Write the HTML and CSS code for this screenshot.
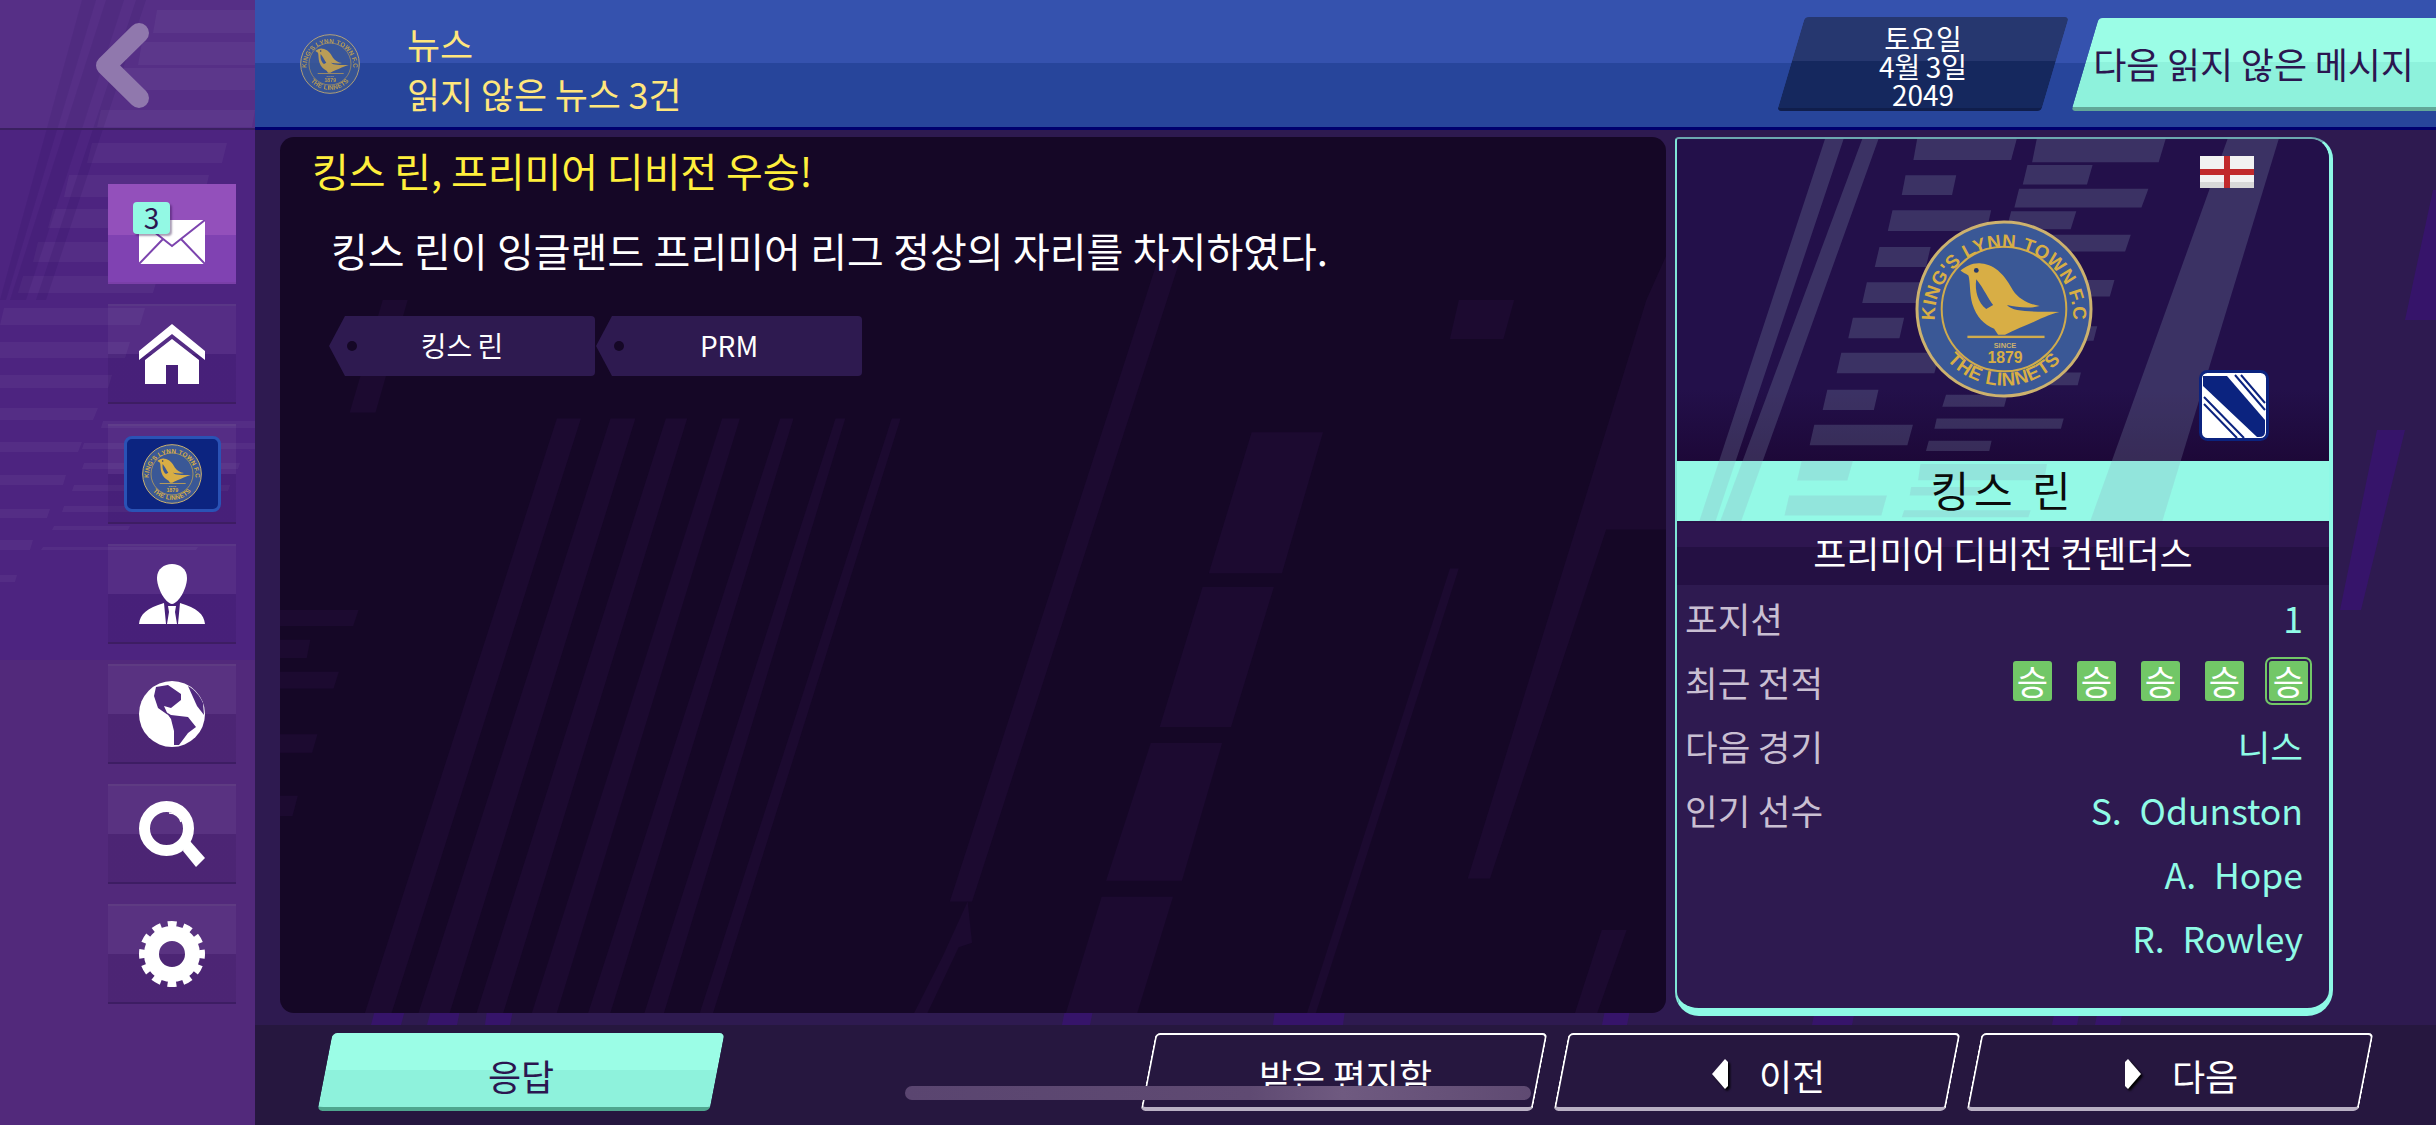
FILE: index.html
```html
<!DOCTYPE html>
<html lang="ko">
<head>
    <meta charset="UTF-8">
    <meta name="viewport" content="width=device-width, initial-scale=1.0">
    <title>뉴스</title>
    <link rel="stylesheet" href="styles.css">
</head>
<body>
    <svg class="defs" width="0" height="0">
        <defs>
            <symbol id="crest" viewBox="0 0 180 180">
                <circle cx="90" cy="90" r="88" fill="#3a5896" stroke="#cdb26e" stroke-width="3"/>
                <circle cx="90" cy="90" r="63" fill="none" stroke="#d0ab4d" stroke-width="2"/>
                <path id="arcTop" d="M20 98A70 70 0 1 1 160 98" fill="none"/>
                <path id="arcBot" d="M15 108A77 77 0 0 0 165 108" fill="none"/>
                <text class="crest-text"><textPath href="#arcTop" startOffset="50%" text-anchor="middle">KING'S LYNN TOWN F.C</textPath></text>
                <text class="crest-text"><textPath href="#arcBot" startOffset="50%" text-anchor="middle">THE LINNETS</textPath></text>
                <path fill="#d8ae45" d="M46 51C52 47 58 43 67 44C82 45 92 58 99 71C105 80 115 85 126 87C116 90 103 88 93 86C100 94 120 92 146 93C130 97 120 104 106 109C100 112 95 114 91 116L84 116L80 110C70 106 62 98 58 85C55 74 56 62 54 56C51 54 48 53 46 51Z"/>
                <path fill="#3a5896" d="M62 60C60 72 64 84 72 90L79 86C74 80 70 70 62 60Z"/>
                <circle cx="62" cy="51" r="2.4" fill="#24386e"/>
                <rect x="53" y="117" width="78" height="2.4" fill="#d0ab4d"/>
                <text class="crest-small" x="91" y="129" text-anchor="middle">SINCE</text>
                <text class="crest-year" x="91" y="145" text-anchor="middle">1879</text>
            </symbol>
        </defs>
    </svg>

    <div class="app">
        <aside class="sidebar">
            <svg class="sidebar-bars" viewBox="0 0 255 660" width="255" height="660">
                <g fill="#fff" fill-opacity=".045">
                    <polygon points="157,10 255,10 255,33 153,33"/>
                    <polygon points="142,42 255,42 255,65 138,65"/>
                    <polygon points="124,68 255,68 255,90 120,90"/>
                    <polygon points="101,110 255,110 252,127 97,127"/>
                    <polygon points="92,143 227,143 222,163 87,163"/>
                    <polygon points="69,175 209,175 204,197 64,197"/>
                    <polygon points="53,209 194,209 189,228 48,228"/>
                    <polygon points="38,242 178,242 173,262 33,262"/>
                    <polygon points="23,276 158,276 153,293 18,293"/>
                    <polygon points="4,308 145,308 140,325 0,325"/>
                    <polygon points="0,342 130,342 125,358 0,358"/>
                    <polygon points="0,375 112,375 108,388 0,388"/>
                    <polygon points="0,408 98,408 93,420 0,420"/>
                    <polygon points="0,442 82,442 78,452 0,452"/>
                    <polygon points="0,475 66,475 63,485 0,485"/>
                    <polygon points="0,509 50,509 47,518 0,518"/>
                    <polygon points="0,540 33,540 30,550 0,550"/>
                    <polygon points="0,575 17,575 15,582 0,582"/>
                    <polygon points="103,421 255,421 255,428 101,428"/>
                    <polygon points="84,443 255,443 255,449 82,449"/>
                    <polygon points="84,463 240,463 238,469 82,469"/>
                    <polygon points="74,485 230,485 228,491 72,491"/>
                    <polygon points="64,506 210,506 208,512 62,512"/>
                    <polygon points="54,526 130,526 128,530 52,530"/>
                    <polygon points="43,547 198,547 196,550 41,550"/>
                </g>
                <g fill="#2c0f5c" fill-opacity=".16">
                    <polygon points="82,0 96,0 6,300 0,300"/>
                    <polygon points="106,0 124,0 26,300 10,300"/>
                    <polygon points="136,0 146,0 46,300 36,300"/>
                </g>
            </svg>

            <a class="back">
                <svg viewBox="0 0 56 85" width="56" height="85">
                    <path d="M44 10L11 42.500L44 75" fill="none" stroke="#9078ad" stroke-width="20" stroke-linecap="round" stroke-linejoin="round"/>
                </svg>
            </a>

            <nav class="nav">
                <a class="nav-btn active">
                    <span class="mail">
                        <svg viewBox="0 0 66 44" width="66" height="44">
                            <rect width="66" height="44" fill="#fff"/>
                            <path d="M0 0L33 26L66 0M0 44L24 19M66 44L42 19" fill="none" stroke="#7c44ae" stroke-width="2"/>
                        </svg>
                        <span class="mail-count">3</span>
                    </span>
                </a>
                <a class="nav-btn">
                    <svg viewBox="0 0 66 60" width="66" height="60">
                        <path fill="#fff" d="M33 0L66 27V36L33 10L0 36V27Z"/>
                        <path fill="#fff" d="M33 15L60 36V60H39V41H27V60H6V36Z"/>
                    </svg>
                </a>
                <a class="nav-btn">
                    <span class="club-badge">
                        <svg width="60" height="60"><use href="#crest"/></svg>
                    </span>
                </a>
                <a class="nav-btn">
                    <svg viewBox="0 0 66 60" width="66" height="60">
                        <path fill="#fff" d="M33 0C41 0 48 5 48 14C48 24 40 39 33 40C26 39 18 24 18 14C18 5 25 0 33 0Z"/>
                        <path fill="#fff" d="M0 60C1 50 8 44 25 39L27 60ZM66 60C65 50 58 44 41 39L39 60Z"/>
                        <path fill="#fff" d="M29 42H37L36 48L38 60H28L30 48Z"/>
                    </svg>
                </a>
                <a class="nav-btn">
                    <svg viewBox="0 0 66 66" width="66" height="66">
                        <circle cx="33" cy="33" r="33" fill="#fff"/>
                        <path fill="#50297f" d="M17 6L29 4L42 13L42 19L32 27L25 25L29 34L19 27L15 15Z"/>
                        <path fill="#50297f" d="M27 31L32 34L49 36L57 46L49 52L40 64L35 64L35 50L32 38Z"/>
                        <path fill="#50297f" d="M49 5C56 9 61 15 64 22L65 34L58 25Z"/>
                    </svg>
                </a>
                <a class="nav-btn">
                    <svg viewBox="0 0 66 66" width="66" height="66">
                        <circle cx="27.500" cy="27.500" r="22" fill="none" stroke="#fff" stroke-width="11"/>
                        <path d="M30 12C36 12 41 16 42 21" fill="none" stroke="#fff" stroke-width="1.500"/>
                        <path d="M46 44L51 40L66 57L57 66L44 50Z" fill="#fff"/>
                    </svg>
                </a>
                <a class="nav-btn">
                    <svg viewBox="0 0 66 66" width="66" height="66">
                        <circle cx="33" cy="33" r="20.500" fill="none" stroke="#fff" stroke-width="15"/>
                        <circle cx="33" cy="33" r="29" fill="none" stroke="#fff" stroke-width="8" stroke-dasharray="8.500 6.680" stroke-dashoffset="4.250"/>
                    </svg>
                </a>
            </nav>
        </aside>

        <div class="main">
            <header class="topbar">
                <svg class="topbar-crest" width="60" height="60"><use href="#crest"/></svg>
                <div class="topbar-title">
                    <div>뉴스</div>
                    <div>읽지 않은 뉴스 3건</div>
                </div>
                <div class="date-box">
                    <span>토요일</span>
                    <span>4월 3일</span>
                    <span>2049</span>
                </div>
                <a class="next-unread">다음 읽지 않은 메시지</a>
            </header>

            <div class="content">
                <svg class="content-stripes" viewBox="0 0 2181 895" width="2181" height="895">
                    <g fill="#36146a">
                        <polygon points="2122,300 2150,300 2106,480 2085,480"/>
                        <polygon points="2150,190 2178,60 2181,60 2181,190"/>
                        <polygon points="120,880 150,880 146,895 116,895"/>
                        <polygon points="176,880 205,880 202,895 172,895"/>
                        <polygon points="232,880 258,880 255,895 230,895"/>
                        <polygon points="810,880 838,880 835,895 807,895"/>
                        <polygon points="1020,880 1090,880 1088,895 1018,895"/>
                        <polygon points="1350,880 1375,880 1372,895 1347,895"/>
                        <polygon points="1560,880 1600,880 1597,895 1557,895"/>
                        <polygon points="1800,880 1825,880 1822,895 1797,895"/>
                        <polygon points="1843,880 1868,880 1865,895 1840,895"/>
                    </g>
                </svg>

                <section class="article">
                    <svg class="article-stripes" viewBox="0 -355 1552 1908" preserveAspectRatio="none">
                        <g fill="#1c0a30">
                            <polygon points="310,258 337,258 125,1553 95,1553"/>
                            <polygon points="370,258 398,258 190,1553 155,1553"/>
                            <polygon points="432,258 456,258 250,1553 220,1553"/>
                            <polygon points="495,258 515,258 310,1553 282,1553"/>
                            <polygon points="560,258 575,258 370,1553 345,1553"/>
                            <polygon points="622,258 633,258 430,1553 408,1553"/>
                            <polygon points="685,258 695,258 485,1553 470,1553"/>
                            <polygon points="1088,288 1168,288 1122,595 1040,595"/>
                            <polygon points="1033,625 1113,625 1065,930 985,930"/>
                            <polygon points="975,965 1055,965 1010,1265 925,1265"/>
                            <polygon points="920,1300 1000,1300 960,1553 880,1553"/>
                            <polygon points="985,-100 1010,-100 775,1310 750,1310"/>
                            <polygon points="742,1430 770,1310 775,1400 760,1410 725,1553 710,1553"/>
                            <polygon points="1310,585 1320,585 1160,1553 1150,1553"/>
                            <polygon points="1530,0 1553,-100 1553,500 1485,500 1355,1260 1330,1260"/>
                            <polygon points="1480,1372 1508,1372 1475,1553 1450,1553"/>
                            <polygon points="1320,0 1382,0 1370,85 1310,85"/>
                            <polygon points="115,0 143,0 107,245 78,245"/>
                            <polygon points="0,675 88,675 82,710 0,710"/>
                            <polygon points="0,740 34,740 30,780 0,780"/>
                            <polygon points="0,810 66,810 60,846 0,846"/>
                            <polygon points="0,946 42,946 36,986 0,986"/>
                            <polygon points="0,1080 20,1080 14,1124 0,1124"/>
                        </g>
                    </svg>
                    <h1 class="headline">킹스 린, 프리미어 디비전 우승!</h1>
                    <p class="lead">킹스 린이 잉글랜드 프리미어 리그 정상의 자리를 차지하였다.</p>
                    <div class="tags">
                        <a class="tag">킹스 린</a>
                        <a class="tag">PRM</a>
                    </div>
                </section>

                <aside class="card">
                    <div class="card-top">
                        <svg class="card-stripes" viewBox="-53 397 1401 1114" preserveAspectRatio="none">
                            <g fill="#8ea3bd" fill-opacity=".23">
                                <polygon points="265,397 305,397 30,1511 -5,1511"/>
                                <polygon points="345,397 380,397 85,1511 40,1511"/>
                                <polygon points="1130,397 1240,397 990,1511 835,1511"/>
                                <polygon points="463,397 677,397 665,458 455,458"/>
                                <polygon points="438,503 547,503 538,560 430,560"/>
                                <polygon points="410,605 622,605 612,665 400,665"/>
                                <polygon points="382,712 492,712 482,770 372,770"/>
                                <polygon points="355,815 482,815 472,875 345,875"/>
                                <polygon points="325,918 435,918 425,978 315,978"/>
                                <polygon points="300,1020 512,1020 500,1080 290,1080"/>
                                <polygon points="270,1128 380,1128 370,1187 260,1187"/>
                                <polygon points="242,1230 454,1230 442,1290 232,1290"/>
                                <polygon points="215,1335 325,1335 313,1393 205,1393"/>
                                <polygon points="188,1437 398,1437 386,1495 178,1495"/>
                                <polygon points="720,397 997,397 982,465 710,465"/>
                                <polygon points="700,473 840,473 828,530 690,530"/>
                                <polygon points="682,542 960,542 945,597 672,597"/>
                                <polygon points="665,608 805,608 793,660 655,660"/>
                                <polygon points="650,676 922,676 910,725 640,725"/>
                                <polygon points="630,808 887,808 877,856 620,856"/>
                                <polygon points="610,943 850,943 842,985 600,985"/>
                                <polygon points="570,1078 815,1078 808,1115 560,1115"/>
                                <polygon points="525,1143 657,1143 650,1178 517,1178"/>
                                <polygon points="505,1212 778,1212 772,1242 500,1242"/>
                                <polygon points="488,1277 623,1277 618,1307 482,1307"/>
                                <polygon points="470,1345 742,1345 736,1392 465,1392"/>
                                <polygon points="450,1412 600,1412 595,1437 447,1437"/>
                                <polygon points="435,1480 707,1480 702,1500 430,1500"/>
                            </g>
                        </svg>
                        <div class="card-crest-row">
                            <svg class="crest-big" width="178" height="178"><use href="#crest"/></svg>
                            <svg class="flag" viewBox="0 0 54 32" width="54" height="32">
                                <rect width="54" height="32" fill="#f2f2f2"/>
                                <rect y="26" width="54" height="6" fill="#d8d8d8"/>
                                <rect x="24" width="6" height="32" fill="#c12a2c"/>
                                <rect y="13" width="54" height="6" fill="#c12a2c"/>
                            </svg>
                            <svg class="kit" viewBox="0 0 70 71" width="70" height="71">
                                <rect x="1.500" y="1.500" width="67" height="68" rx="7" fill="#fff" stroke="#0b237f" stroke-width="3"/>
                                <path d="M4 6H28L66 50V62Q66 67 60 67L58 67L4 16Z" fill="#0b237f"/>
                                <path d="M36 5L66 40M42 5L66 33M5 27L45 68M5 34L38 68" stroke="#0b237f" stroke-width="2" fill="none"/>
                            </svg>
                        </div>
                        <h2 class="club-name">킹스 린</h2>
                    </div>
                    <div class="league">프리미어 디비전 컨텐더스</div>
                    <dl class="facts">
                        <div class="fact"><dt>포지션</dt><dd>1</dd></div>
                        <div class="fact">
                            <dt>최근 전적</dt>
                            <dd class="form">
                                <span class="win">승</span>
                                <span class="win">승</span>
                                <span class="win">승</span>
                                <span class="win">승</span>
                                <span class="win latest">승</span>
                            </dd>
                        </div>
                        <div class="fact"><dt>다음 경기</dt><dd>니스</dd></div>
                        <div class="fact"><dt>인기 선수</dt><dd>S.&nbsp; Odunston</dd></div>
                        <div class="fact"><dt></dt><dd>A.&nbsp; Hope</dd></div>
                        <div class="fact"><dt></dt><dd>R.&nbsp; Rowley</dd></div>
                    </dl>
                </aside>
            </div>

            <footer class="actions">
                <a class="action primary">응답</a>
                <div class="action-group">
                    <a class="action inbox">받은 편지함</a>
                    <a class="action has-arrow">
                        <svg viewBox="0 0 18 32" width="18" height="32"><path d="M0 15L13 0L16 3V27L13 30Z" fill="#fff"/></svg>
                        이전
                    </a>
                    <a class="action has-arrow">
                        <svg viewBox="0 0 18 32" width="18" height="32"><path d="M16 15L3 0L0 3V27L3 30Z" fill="#fff"/></svg>
                        다음
                    </a>
                </div>
            </footer>
        </div>
    </div>

    <div class="home-indicator"></div>
</body>
</html>
```

FILE: styles.css
```css
*,
*::before,
*::after {
    box-sizing: border-box;
}
body {
    margin: 0;
    width: 2436px;
    height: 1125px;
    overflow: hidden;
    background-color: #2e1a50;
    color: white;
    font-family: "Noto Sans CJK KR", "Noto Sans", sans-serif;
    font-size: 36px;
    word-spacing: -2.500px;
    position: relative;
}
.defs {
    position: absolute;
}
.crest-text {
    font-family: "Liberation Sans", sans-serif;
    font-weight: bold;
    font-size: 19px;
    letter-spacing: 0.5px;
    word-spacing: 0;
    fill: #d8ae45;
}
.crest-small {
    font-family: "Liberation Sans", sans-serif;
    font-weight: bold;
    font-size: 7.500px;
    fill: #cdb26e;
}
.crest-year {
    font-family: "Liberation Sans", sans-serif;
    font-weight: bold;
    font-size: 16px;
    fill: #d8ae45;
}
.app {
    display: flex;
    height: 100%;
}

/* left rail */
.sidebar {
    width: 255px;
    flex: none;
    position: relative;
    background: linear-gradient(#4d2480, #4d2480 660px, #52297b 660px);
}
.sidebar-bars {
    position: absolute;
    top: 0;
    left: 0;
}
.back {
    position: relative;
    display: flex;
    height: 130px;
    padding: 23px 0 0 95px;
    border-bottom: 2px solid #3a2060;
    background: rgba(255, 255, 255, 0.05);
}
.nav {
    position: relative;
    display: flex;
    flex-direction: column;
    gap: 20px;
    padding: 54px 0 0 108px;
}
.nav-btn {
    display: flex;
    align-items: center;
    justify-content: center;
    width: 128px;
    height: 100px;
    background: linear-gradient(rgba(255, 255, 255, 0.045), rgba(255, 255, 255, 0.045) 50%, rgba(20, 0, 60, 0.1) 50%);
    border-top: 2px solid rgba(255, 255, 255, 0.1);
    border-bottom: 2px solid #3d1d63;
}
.nav-btn.active {
    background: linear-gradient(#9350bb, #9350bb 52%, #8042b2 52%);
    border-top: 0;
    border-bottom: 2px solid #7a3fa8;
}
.mail {
    position: relative;
    display: block;
    width: 66px;
    height: 44px;
    margin-top: 18px;
}
.mail svg {
    display: block;
}
.mail-count {
    position: absolute;
    top: -18px;
    left: -6px;
    width: 37px;
    height: 32px;
    background-color: #93f9e4;
    border-radius: 4px;
    box-shadow: 2px 2px 2px rgba(40, 10, 70, 0.4);
    color: #2b1650;
    font-size: 28px;
    line-height: 30px;
    text-align: center;
}
.club-badge {
    display: flex;
    align-items: center;
    justify-content: center;
    width: 97px;
    height: 76px;
    background-color: #0c2480;
    border: 3px solid #2a52b5;
    border-radius: 8px;
}

.main {
    flex: 1;
    display: flex;
    flex-direction: column;
    min-width: 0;
}

/* header */
.topbar {
    display: flex;
    align-items: flex-start;
    height: 130px;
    flex: none;
    padding-left: 45px;
    background: linear-gradient(#3552ae, #3552ae 63px, #27459b 63px);
    border-bottom: 3px solid #00006e;
}
.topbar-crest {
    margin-top: 34px;
    flex: none;
    opacity: 0.82;
}
.topbar-title {
    margin-left: 47px;
    padding-top: 18px;
    color: #ffe67c;
    line-height: 50px;
    flex: 1;
}
.date-box {
    position: relative;
    display: flex;
    flex-direction: column;
    align-items: center;
    width: 292px;
    height: 94px;
    margin-top: 17px;
    padding-top: 7px;
    font-size: 28px;
    line-height: 28px;
}
.date-box::before {
    content: "";
    position: absolute;
    inset: 0 14px;
    z-index: 0;
    transform: skewX(-16.500deg);
    border-radius: 4px;
    background: linear-gradient(#26376f, #26376f 48%, #15285e 48%);
    border-bottom: 3px solid #101e4c;
}
.date-box span {
    position: relative;
}
.next-unread {
    position: relative;
    isolation: isolate;
    display: flex;
    align-items: center;
    justify-content: flex-end;
    width: 365px;
    height: 93px;
    margin: 18px 0 0 2px;
    padding: 0 22px 4px 0;
    color: #2b1650;
    white-space: nowrap;
    overflow: hidden;
}
.next-unread::before {
    content: "";
    position: absolute;
    inset: 0 -40px 0 14px;
    z-index: -1;
    transform: skewX(-16.500deg);
    border-radius: 4px;
    background: linear-gradient(#9bfde6, #9bfde6 50%, #8ef2dc 50%);
    border-bottom: 4px solid #62a898;
}

/* middle area */
.content {
    position: relative;
    flex: 1;
    display: flex;
    align-items: flex-start;
    gap: 9px;
    padding: 7px 0 0 25px;
    min-height: 0;
}
.content-stripes {
    position: absolute;
    top: 0;
    left: 0;
}
.article {
    position: relative;
    width: 1386px;
    height: 876px;
    flex: none;
    overflow: hidden;
    background-color: #150726;
    border-radius: 14px;
    padding: 6px 0 0 32px;
}
.article-stripes {
    position: absolute;
    top: 0;
    left: 0;
    width: 100%;
    height: 100%;
}
.headline {
    position: relative;
    margin: 0;
    color: #ffef3c;
    font-size: 40px;
    font-weight: normal;
    line-height: 54px;
}
.lead {
    position: relative;
    margin: 26px 0 0 19px;
    font-size: 40px;
    line-height: 54px;
    word-spacing: -1.800px;
}
.tags {
    position: relative;
    display: flex;
    gap: 1px;
    margin: 39px 0 0 17px;
}
.tag {
    position: relative;
    display: flex;
    align-items: center;
    justify-content: center;
    height: 60px;
    width: 266px;
    padding-bottom: 2px;
    background-color: #2e1a50;
    font-size: 28px;
    clip-path: polygon(16px 0, 100% 0, 100% 100%, 16px 100%, 0 50%);
    border-radius: 0 4px 4px 0;
}
.tag::before {
    content: "";
    position: absolute;
    top: 25px;
    left: 18px;
    width: 10px;
    height: 10px;
    border-radius: 50%;
    background-color: #150726;
}

/* club card */
.card {
    position: relative;
    width: 658px;
    height: 879px;
    flex: none;
    overflow: hidden;
    background-color: #2e1a50;
    border-top: 2px solid #6ca8b0;
    border-left: 2px solid #7fe6d6;
    border-right: 4px solid #8ef9e6;
    border-bottom: 8px solid #8ef9e6;
    border-radius: 4px 22px 26px 24px;
}
.card-top {
    position: relative;
    height: 382px;
    background: linear-gradient(#23104a, #23104a 250px, #1d0838 322px, #94f9e6 322px);
}
.card-stripes {
    position: absolute;
    top: 0;
    left: 0;
    width: 100%;
    height: 100%;
}
.card-crest-row {
    position: relative;
    height: 322px;
}
.crest-big {
    position: absolute;
    top: 81px;
    left: 238px;
}
.flag {
    position: absolute;
    top: 17px;
    left: 523px;
}
.kit {
    position: absolute;
    top: 231px;
    left: 522px;
}
.club-name {
    position: relative;
    margin: 0;
    height: 60px;
    color: #0c0c0c;
    font-size: 42px;
    font-weight: normal;
    letter-spacing: 5px;
    line-height: 56px;
    text-align: center;
}
.league {
    height: 64px;
    border-top: 2px solid #2a1248;
    background: linear-gradient(#2e1650, #2e1650 24px, #241043 24px);
    font-size: 36px;
    line-height: 58px;
    text-align: center;
}
.facts {
    margin: 0;
    padding: 0 26px 0 8px;
}
.fact {
    display: flex;
    justify-content: space-between;
    align-items: center;
    height: 64px;
    font-size: 35.500px;
}
.fact dt {
    color: #c9bfd2;
}
.fact dd {
    margin: 0;
    color: #8ffbe6;
    word-spacing: -1px;
}
.form {
    display: flex;
    align-items: center;
    gap: 25px;
    margin-right: -5px !important;
}
.win {
    display: flex;
    align-items: center;
    justify-content: center;
    width: 39px;
    height: 40px;
    background-color: #72c767;
    border-radius: 3px;
    color: white;
    font-size: 34px;
    line-height: 1;
}
.win.latest {
    box-shadow: 0 0 0 2px #2e1a50, 0 0 0 4px #72c767;
    border-radius: 3px;
}

/* footer */
.actions {
    display: flex;
    height: 100px;
    flex: none;
    padding: 8px 62px 0;
    background-color: #26173f;
    position: relative;
}
.action-group {
    display: flex;
    gap: 5px;
    margin-left: auto;
}
.action {
    position: relative;
    display: flex;
    align-items: center;
    justify-content: center;
    width: 408px;
    height: 78px;
    font-size: 36px;
    padding-top: 6px;
}
.action.inbox {
    padding-left: 3px;
}
.action.has-arrow {
    gap: 29px;
    padding-left: 23px;
}
.action::before {
    content: "";
    position: absolute;
    inset: 0 8px;
    transform: skewX(-11deg);
    border: 2px solid white;
    border-bottom: 4px solid #b9b0c4;
    border-radius: 5px;
}
.action svg {
    filter: drop-shadow(2px 2px 1px #000);
}
.action.primary {
    isolation: isolate;
    color: #2b1650;
}
.action.primary::before {
    z-index: -1;
    border: 0;
    border-bottom: 4px solid #4fa68f;
    background: linear-gradient(#9bfde6, #9bfde6 50%, #8ef2dc 50%);
}
.home-indicator {
    position: absolute;
    left: 905px;
    top: 1086px;
    width: 626px;
    height: 14px;
    border-radius: 7px;
    background: linear-gradient(90deg, #5a4570, #5f4a72 55%, #6f5a80 70%, #5f4a72);
}
```
